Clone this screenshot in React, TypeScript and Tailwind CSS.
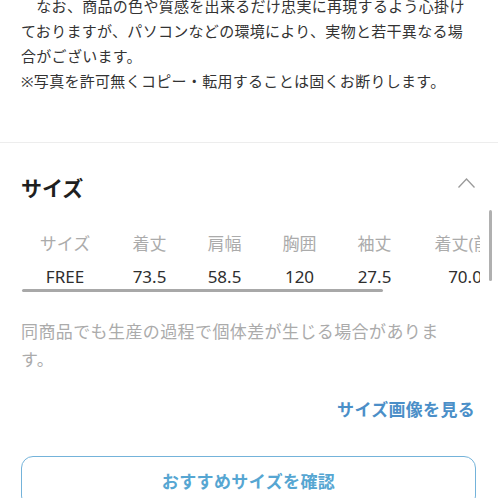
import React from 'react';

interface SizeColumn {
  label: string;
  value: string;
  width: string;
}

// 採寸表 (横スクロールの中身)
const columns: SizeColumn[] = [
  { label: 'サイズ', value: 'FREE', width: 'w-[94px]' },
  { label: '着丈', value: '73.5', width: 'w-[75px]' },
  { label: '肩幅', value: '58.5', width: 'w-[75px]' },
  { label: '胸囲', value: '120', width: 'w-[75px]' },
  { label: '袖丈', value: '27.5', width: 'w-[75px]' },
  { label: '着丈(前)', value: '70.0', width: 'w-[106px]' },
];

export default function App() {
  return (
    <div className="relative w-[498px] h-[498px] overflow-hidden bg-white [font-family:'Noto_Sans','Noto_Sans_CJK_JP',sans-serif]">
      {/* 注意書き */}
      <div className="-mt-[6px] px-[21px] text-[15px] leading-[25px] tracking-[0.3px] text-[#333]">
        <p className="whitespace-nowrap">　なお、商品の色や質感を出来るだけ忠実に再現するよう心掛け</p>
        <p className="whitespace-nowrap">ておりますが、パソコンなどの環境により、実物と若干異なる場</p>
        <p className="whitespace-nowrap">合がございます。</p>
        <p className="whitespace-nowrap">※写真を許可無くコピー・転用することは固くお断りします。</p>
      </div>

      <div className="mt-[48px] h-px bg-[#ededed]" />

      {/* サイズ見出し */}
      <div className="mt-[30px] flex items-start justify-between pl-[21px] pr-[23px]">
        <h2 className="text-[21px] leading-[30px] font-bold text-[#1f1f1f]">サイズ</h2>
        <svg className="mt-[5px]" width="17" height="10" viewBox="0 0 17 10" fill="none">
          <polyline points="0.5,9.5 8.5,1 16.5,9.5" stroke="#9a9a9a" strokeWidth="1.3" />
        </svg>
      </div>

      {/* サイズ表 */}
      <div className="mt-[25px] ml-[18px] w-[462px] overflow-hidden">
        <div className="flex w-max h-[32px] items-center text-[17px] text-[#ababab]">
          {columns.map((col) => (
            <div key={col.label} className={`${col.width} shrink-0 text-center whitespace-nowrap`}>
              {col.label}
            </div>
          ))}
        </div>
        <div className="flex w-max h-[34px] items-center text-[17px] text-[#2e2e2e]">
          {columns.map((col) => (
            <div key={col.label} className={`${col.width} shrink-0 text-center whitespace-nowrap`}>
              {col.value}
            </div>
          ))}
        </div>
        <div className="-mt-[5px] ml-[4px] w-[361px] h-[3px] rounded-full bg-[#a8a8a8]" />
      </div>

      <p className="mt-[26px] px-[21px] text-[17px] leading-[28px] tracking-[0.4px] text-[#ababab]">
        同商品でも生産の過程で個体差が生じる場合がありま
        <br />
        す。
      </p>

      <div className="mt-[24px] pr-[23px] text-right text-[17px] leading-[24px] tracking-[0.3px] font-bold text-[#4b8fc8]">
        サイズ画像を見る
      </div>

      <button className="mt-[34px] ml-[21px] w-[455px] h-[52px] rounded-[12px] border-[1.5px] border-[#74b3da] flex items-center justify-center text-[17px] tracking-[0.4px] font-bold text-[#56a6d2]">
        おすすめサイズを確認
      </button>

      {/* 縦スクロールバー */}
      <div className="absolute left-[489px] top-[210px] w-[3px] h-[71px] rounded-full bg-[#b0b0b0]" />
    </div>
  );
}
